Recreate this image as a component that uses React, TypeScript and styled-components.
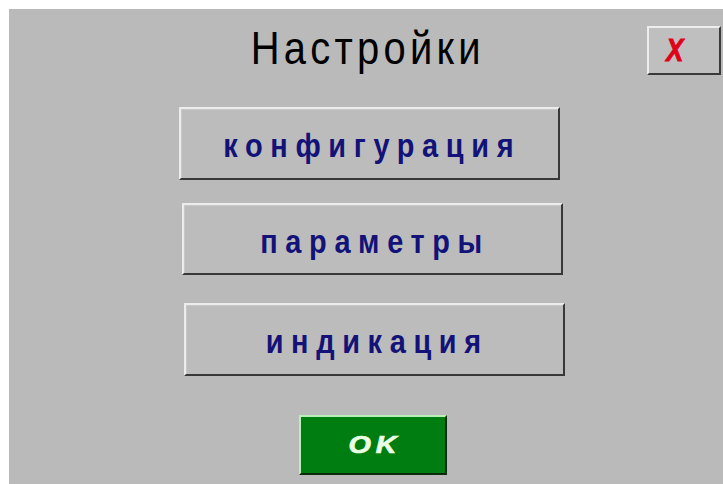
import styled, {createGlobalStyle} from 'styled-components';

const GlobalStyle = createGlobalStyle`
  html, body {
    margin: 0;
    padding: 0;
    background: #fff;
  }
  body {
    font-family: "Liberation Sans", Arial, sans-serif;
  }
`;

const Panel = styled.div`
  display: flex;
  flex-direction: column;
  width: 714px;
  height: 475px;
  margin: 9px 0 0 9px;
  padding-top: 15px;
  box-sizing: border-box;
  background-color: #bababa;
`;

const Header = styled.div`
  display: grid;
  grid-template-columns: 1fr auto 1fr;
  align-items: center;
  height: 49px;
  padding-right: 2px;
`;

// the panel font is narrower or wider than Liberation, so stretch a span of it
const Stretch = styled.span<{$scale: number}>`
  display: inline-block;
  transform: scaleX(${({$scale}) => $scale});
`;

const Title = styled.h1`
  grid-column: 2;
  margin: 0 0 6px;
  padding-left: 5px;
  font-size: 47px;
  font-weight: normal;
  letter-spacing: 5px;
  color: #000;
  line-height: 1;
`;

const CloseButton = styled.button`
  grid-column: 3;
  justify-self: end;
  display: flex;
  align-items: center;
  justify-content: center;
  width: 74px;
  height: 49px;
  padding: 0 18px 0 0;
  box-sizing: border-box;
  background-color: #bfbfbf;
  border: 2px solid;
  border-color: #ededed #3a3a3a #3a3a3a #ededed;
  font-family: "Liberation Sans", Arial, sans-serif;
  font-size: 32px;
  font-weight: 900;
  font-style: italic;
  color: #e0001a;
  -webkit-text-stroke: 1px #e0001a;
  cursor: pointer;
`;

const Menu = styled.div`
  display: flex;
  flex-direction: column;
  align-items: flex-start;
`;

const MenuButton = styled.button<{$x: number; $y: number; $h: number}>`
  display: flex;
  align-items: center;
  justify-content: center;
  width: 381px;
  height: ${({$h}) => $h}px;
  margin-left: ${({$x}) => $x}px;
  margin-top: ${({$y}) => $y}px;
  padding: 4px 0 0 6px;
  box-sizing: border-box;
  background-color: #bcbcbc;
  border: 2px solid;
  border-color: #ececec #383838 #383838 #ececec;
  box-shadow: inset 1px 1px 0 #c8c8c8;
  font-family: "Liberation Sans", Arial, sans-serif;
  font-size: 34px;
  font-weight: bold;
  letter-spacing: 9px;
  color: #121278;
  cursor: pointer;
`;

const OkButton = styled.button`
  display: flex;
  align-items: center;
  justify-content: center;
  width: 148px;
  height: 60px;
  margin: 39px 0 0 290px;
  padding: 0 0 0 4px;
  box-sizing: border-box;
  background-color: #007d10;
  border: 2px solid;
  border-color: #b8f0b8 #0c2a0c #0c2a0c #b8f0b8;
  font-family: "Liberation Sans", Arial, sans-serif;
  font-size: 24px;
  font-weight: bold;
  font-style: italic;
  letter-spacing: 4px;
  color: #eaffe4;
  -webkit-text-stroke: 0.7px #eaffe4;
  cursor: pointer;
`;

const items = [
  {label: 'конфигурация', x: 170, y: 34, h: 73},
  {label: 'параметры', x: 173, y: 23, h: 72},
  {label: 'индикация', x: 175, y: 28, h: 73}
];

function App(): JSX.Element {
  return (
    <>
      <GlobalStyle />
      <Panel>
        <Header>
          <Title>
            <Stretch $scale={0.85}>Настройки</Stretch>
          </Title>
          <CloseButton>
            <Stretch $scale={0.8}>X</Stretch>
          </CloseButton>
        </Header>
        <Menu>
          {items.map((item) => (
            <MenuButton key={item.label} $x={item.x} $y={item.y} $h={item.h}>
              <Stretch $scale={0.85}>{item.label}</Stretch>
            </MenuButton>
          ))}
          <OkButton>
            <Stretch $scale={1.2}>OK</Stretch>
          </OkButton>
        </Menu>
      </Panel>
    </>
  );
}

export default App;
